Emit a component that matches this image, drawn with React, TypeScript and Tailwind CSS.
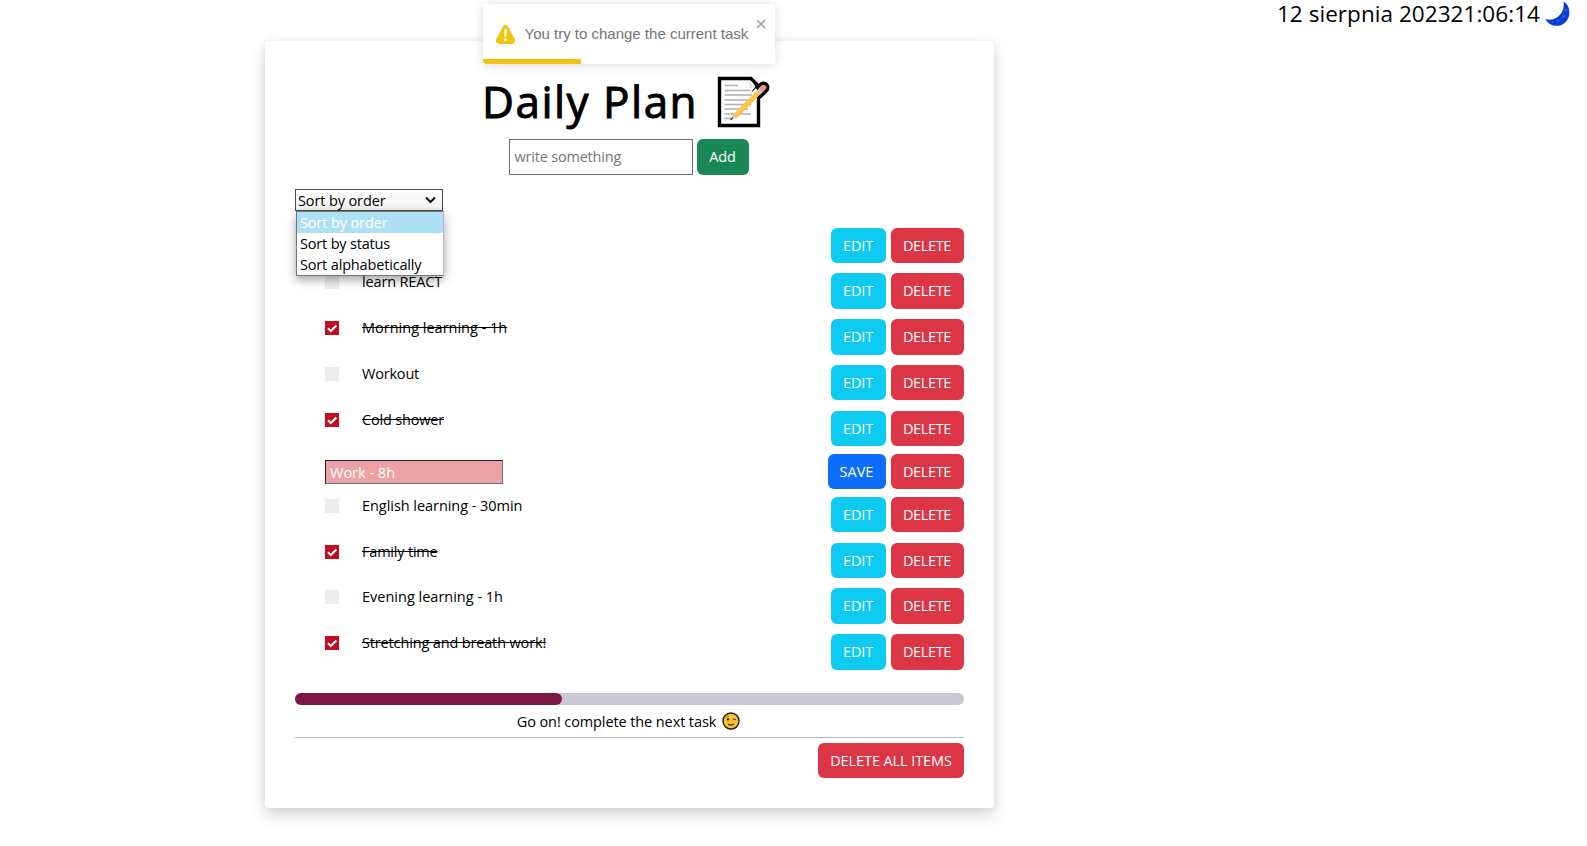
type Task = {
  name: string;
  done?: boolean;
  editing?: boolean;
  tracking?: string;
};

const tasks: Task[] = [
  { name: '' },
  { name: 'learn REACT', tracking: 'tracking-[-0.16px]' },
  { name: 'Morning learning - 1h', done: true, tracking: 'tracking-normal' },
  { name: 'Workout', tracking: 'tracking-[-0.2px]' },
  { name: 'Cold shower', done: true, tracking: 'tracking-[-0.18px]' },
  { name: 'Work - 8h', editing: true },
  { name: 'English learning - 30min', tracking: 'tracking-[-0.05px]' },
  { name: 'Family time', done: true, tracking: 'tracking-[-0.2px]' },
  { name: 'Evening learning - 1h', tracking: 'tracking-normal' },
  { name: 'Stretching and breath work!', done: true, tracking: 'tracking-[-0.15px]' },
];

function MemoIcon() {
  return (
    <svg className="mt-[6px] ml-[19px] h-[52px] w-[53px] shrink-0" viewBox="0 0 53 52">
      <path d="M2.500 2.500H34L41.500 10V49.500H2.500Z" fill="#fff" stroke="#000" strokeWidth="3.400" />
      <path d="M32 4V12H39Z" fill="#e3e6ee" />
      <path
        d="M8 9.500H21M8 14.500H33M7.500 19H36M7.500 24H33M7.500 28.500H34M7.500 33H31M7.500 38H34M7.500 42.500H14"
        stroke="#b0b0b0"
        strokeWidth="1.400"
      />
      <path d="M40.500 17.500L46.500 11.500" stroke="#000" strokeWidth="12" strokeLinecap="round" />
      <path d="M34 17L40 11V24L36 24Z" fill="#fff" />
      <path d="M35 4L44 12L40 14Z" fill="#000" />
      <path d="M15 43L17 37.500L21 41.500Z" fill="#f3c3a0" />
      <path d="M18.500 39.500L42 16" stroke="#fcc544" strokeWidth="5" />
      <path d="M20 41L43.500 17.500" stroke="#f2b538" strokeWidth="1" />
      <path d="M41.500 16.500L45 13" stroke="#c5c3c8" strokeWidth="5.400" />
      <path d="M45.500 12.500L46.500 11.500" stroke="#f0938a" strokeWidth="5.400" strokeLinecap="round" />
      <path d="M13.500 44L16 41.500" stroke="#333" strokeWidth="1.200" />
    </svg>
  );
}

function MoonIcon() {
  return (
    <svg className="mt-px ml-[5px] h-[26px] w-[26px]" viewBox="0 0 26 26">
      <path
        d="M18.500 0.500C23 3 25.500 9 24 15C22 22 16 25.500 10 24.700C5.500 24.200 2 21.500 0.500 18C5 19.500 10 18.500 14 14.800C18 11 19.500 5.500 18.500 0.500Z"
        fill="#0a3fce"
      />
      <circle cx="20.500" cy="9" r="1.200" fill="#2b62ea" />
      <circle cx="18.500" cy="15.500" r="1.500" fill="#2b62ea" />
      <circle cx="13" cy="20" r="1.300" fill="#2b62ea" />
      <circle cx="7.500" cy="21" r="1" fill="#2b62ea" />
    </svg>
  );
}

function WinkIcon() {
  return (
    <svg className="h-[18px] w-[18px]" viewBox="0 0 18 18">
      <circle cx="9" cy="9" r="8" fill="#fcc330" stroke="#1c1a14" strokeWidth="1.400" />
      <circle cx="6" cy="7.300" r="1.200" fill="#3b2c14" />
      <path d="M10.800 7.800Q12.300 6.300 14 7.800" fill="none" stroke="#3b2c14" strokeWidth="1" />
      <path d="M4.500 4.800Q5.500 4 6.800 4.400" fill="none" stroke="#3b2c14" strokeWidth="0.700" />
      <path d="M6 12Q9 14.300 12 11.800" fill="none" stroke="#3b2c14" strokeWidth="1.100" />
    </svg>
  );
}

function Checkbox({ checked }: { checked?: boolean }) {
  return checked ? (
    <span className="mt-[2px] flex size-[14px] shrink-0 items-center justify-center bg-[#c20d23]">
      <svg className="size-[14px]" viewBox="0 0 14 14">
        <path d="M3 7.300L5.800 10L11.300 4.500" fill="none" stroke="#fff" strokeWidth="2" />
      </svg>
    </span>
  ) : (
    <span className="mt-[2px] size-[14px] shrink-0 bg-[#ededed]" />
  );
}

function TaskRow({ task, tight }: { task: Task; tight: boolean }) {
  return (
    <li className={`flex items-start ${tight ? 'h-[43px]' : 'h-[45.800px]'}`}>
      {task.editing ? (
        <div className="mt-[6px] h-[24px] w-[178px] border border-t-[#2b2020] border-r-[#767676] border-b-[#767676] border-l-[#2b2020] bg-[#eba2a4] pl-[4px] leading-[23px] text-white">
          {task.name}
        </div>
      ) : (
        <>
          {task.name && <Checkbox checked={task.done} />}
          <span className={`ml-[23px] leading-[18.500px] ${task.tracking ?? ''} ${task.done ? 'line-through' : ''}`}>
            {task.name}
          </span>
        </>
      )}
      <div className="ml-auto flex h-[35.500px] gap-[5px] text-center leading-[35.500px] text-white">
        {task.editing ? (
          <button className="w-[58px] rounded-[6px] bg-[#0d6efd] pr-px">SAVE</button>
        ) : (
          <button className="w-[55px] rounded-[6px] bg-[#0dcaf0] pr-px tracking-[-0.15px]">EDIT</button>
        )}
        <button className="w-[73px] rounded-[6px] bg-[#dc3545] pr-px tracking-[-0.35px]">DELETE</button>
      </div>
    </li>
  );
}

function SortSelect() {
  return (
    <div className="relative mt-[14px] h-[22px] w-[148px]">
      <div className="flex h-[22px] items-center justify-between border border-[#4a4a4a] bg-gradient-to-b from-white to-[#f1f1f1] pr-[6px] pl-[2px] tracking-[-0.12px]">
        <span className="pt-px leading-[21px]">Sort by order</span>
        <svg className="h-[8px] w-[11px]" viewBox="0 0 11 8">
          <path d="M1 1.500L5.500 6L10 1.500" fill="none" stroke="#111" strokeWidth="2" />
        </svg>
      </div>
      <ul className="absolute top-[22px] left-[1px] z-10 w-[148px] border border-[#777] border-r-[#bbb] bg-white leading-[21px] shadow-[0_4px_9px_rgba(0,0,0,0.35)]">
        <li className="bg-[#addff5] pl-[3px] tracking-[-0.12px] text-white">Sort by order</li>
        <li className="pl-[3px] tracking-[-0.18px]">Sort by status</li>
        <li className="pl-[3px] tracking-[-0.16px]">Sort alphabetically</li>
      </ul>
    </div>
  );
}

function Toast() {
  return (
    <div className="absolute top-[4px] left-[483px] z-20 flex h-[60px] w-[292px] items-center overflow-hidden rounded-[4px] bg-white pl-[13px] font-['Liberation_Sans',sans-serif] text-[15px] text-[#757575]">
      <svg className="h-[19px] w-[19px]" viewBox="0 0 24 24">
        <path
          fill="#f1c40f"
          d="M23.320 17.191L15.438 2.184C14.728.833 13.416 0 11.996 0c-1.420 0-2.733.833-3.443 2.184L.533 17.448a4.744 4.744 0 000 4.368C1.243 23.167 2.555 24 3.975 24h16.050C22.220 24 24 22.044 24 19.632c0-.904-.251-1.746-.680-2.440zm-9.622 1.460c0 1.033-.724 1.823-1.698 1.823s-1.698-.790-1.698-1.822v-.043c0-1.028.724-1.822 1.698-1.822s1.698.790 1.698 1.822v.043zm.039-12.285l-.840 8.060c-.057.581-.408.943-.897.943-.490 0-.840-.367-.896-.942l-.840-8.065c-.057-.624.250-1.095.779-1.095h1.910c.528.005.840.476.784 1.100z"
        />
      </svg>
      <span className="ml-[9.500px] whitespace-nowrap">You try to change the current task</span>
      <svg className="absolute top-[14.500px] right-[9px] size-[10px]" viewBox="0 0 10 10">
        <path d="M1 1L9 9M9 1L1 9" stroke="#a8a8a8" strokeWidth="1.700" />
      </svg>
      <div className="absolute bottom-0 left-0 h-[5px] w-[98px] bg-[#f1c40f]" />
    </div>
  );
}

export default function App() {
  return (
    <div className="relative flex h-[846px] items-start bg-white pl-[265px] font-['Open_Sans','Noto_Sans',sans-serif] text-[14.500px] text-black">
      <div className="absolute top-[4px] left-[483px] z-10 h-[60px] w-[292px] rounded-[4px] shadow-[0_1px_10px_rgba(0,0,0,0.1),0_2px_15px_rgba(0,0,0,0.05)]" />
      <Toast />
      <main className="mt-[41px] flex h-[767px] w-[729px] flex-col rounded-[4px] bg-white px-[30px] pt-[29px] shadow-[0_8px_16px_rgba(0,0,0,0.15),0_0_8px_rgba(0,0,0,0.08)]">
        <h1 className="ml-[187px] flex h-[60px] text-[44px] leading-[62px] font-normal tracking-[1.500px] whitespace-nowrap [-webkit-text-stroke:1px_black]">
          Daily Plan
          <MemoIcon />
        </h1>
        <div className="mt-[9px] mr-[2px] flex h-[36px] justify-center gap-[4px] leading-[34px]">
          <div className="w-[184px] border border-[#6b6b6b] pl-[5px] leading-[33px] tracking-[-0.2px] text-[#757575]">
            write something
          </div>
          <button className="w-[52px] rounded-[6px] bg-[#198754] tracking-[-0.14px] text-white">Add</button>
        </div>
        <SortSelect />
        <ul className="mt-[16.600px] h-[465.400px] pl-[30px]">
          {tasks.map((task, i) => (
            <TaskRow key={i} task={task} tight={i === 4 || i === 5} />
          ))}
        </ul>
        <div className="h-[12px] shrink-0 rounded-full bg-[#cac8d5]">
          <div className="h-full w-[267px] rounded-full bg-[#7d1843]" />
        </div>
        <div className="flex h-[33px] items-center justify-center gap-[6px] border-b border-[#b5b8ba] pt-px pr-[2px] tracking-[-0.1px]">
          Go on! complete the next task
          <WinkIcon />
        </div>
        <button className="mt-[5px] h-[35px] w-[146px] self-end rounded-[6px] bg-[#dc3545] leading-[35px] tracking-[-0.1px] text-white">
          DELETE ALL ITEMS
        </button>
      </main>
      <div className="mr-[16px] ml-auto flex text-[22.500px] leading-[28px] tracking-[0.05px]">
        <span>12 sierpnia 202321:06:14</span>
        <MoonIcon />
      </div>
    </div>
  );
}
